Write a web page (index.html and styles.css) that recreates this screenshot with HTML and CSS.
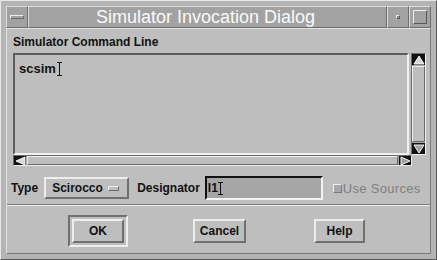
FILE: index.html
```html
<!DOCTYPE html>
<html lang="en">
<head>
    <meta charset="UTF-8">
    <title>Simulator Invocation Dialog</title>
    <link rel="stylesheet" href="styles.css">
</head>
<body>
    <div class="window">
        <!-- Рамка оконного менеджера -->
        <div class="titlebar">
            <div class="wm-btn"><span class="menu-bar"></span></div>
            <div class="title">Simulator Invocation Dialog</div>
            <div class="wm-btn"><span class="min-dot"></span></div>
            <div class="wm-btn"><span class="max-box"></span></div>
        </div>

        <div class="dialog">
            <div class="label">Simulator Command Line</div>

            <div class="scrolled">
                <div class="text-row">
                    <div class="text-area">
                        <span class="cmd">scsim</span><span class="ibeam"></span>
                    </div>
                    <div class="vscroll">
                        <div class="arrow">
                            <svg width="12" height="10" viewBox="0 0 12 10"><polygon points="6,1 11,9 1,9" fill="#d8d8d8" stroke="#f4f4f4"/></svg>
                        </div>
                        <div class="v-slider"></div>
                        <div class="arrow">
                            <svg width="12" height="10" viewBox="0 0 12 10"><polygon points="1,1 11,1 6,9" fill="#a0a0a0" stroke="#f4f4f4"/></svg>
                        </div>
                    </div>
                </div>
                <div class="hscroll">
                    <div class="arrow h">
                        <svg width="11" height="10" viewBox="0 0 11 10"><polygon points="1,5 10,1 10,9" fill="#d8d8d8" stroke="#f4f4f4"/></svg>
                    </div>
                    <div class="h-slider"></div>
                    <div class="arrow h">
                        <svg width="11" height="10" viewBox="0 0 11 10"><polygon points="1,1 10,5 1,9" fill="#a0a0a0" stroke="#f4f4f4"/></svg>
                    </div>
                </div>
            </div>

            <div class="options">
                <span class="opt-label">Type</span>
                <div class="option-menu">Scirocco <span class="opt-bar"></span></div>
                <span class="opt-label designator">Designator</span>
                <div class="field"><span class="field-text">I1</span><span class="ibeam small"></span></div>
                <div class="toggle"><span class="check"></span><span class="toggle-text">Use Sources</span></div>
            </div>

            <div class="separator"></div>

            <div class="actions">
                <div class="default-ring"><button class="push">OK</button></div>
                <button class="push">Cancel</button>
                <button class="push">Help</button>
            </div>
        </div>
    </div>
</body>
</html>
```

FILE: styles.css
```css
* {
    box-sizing: border-box;
    font-family: 'Liberation Sans', Arial, sans-serif;
}
body {
    margin: 0;
    background-color: #bebebe;
}

/* Рамка окна */
.window {
    width: 437px;
    height: 260px;
    padding: 5px;
    background-color: #b4b4b4;
    border: 1px solid;
    border-color: #e8e8e8 #5a5a5a #5a5a5a #e8e8e8;
    display: flex;
    flex-direction: column;
}
.titlebar {
    height: 22px;
    display: flex;
    background-color: #a2a2a2;
}
.wm-btn {
    width: 22px;
    height: 22px;
    border: 1px solid;
    border-color: #dcdcdc #6c6c6c #6c6c6c #dcdcdc;
    display: flex;
    align-items: center;
    justify-content: center;
}
.menu-bar {
    width: 14px;
    height: 4px;
    border: 1px solid;
    border-color: #eeeeee #6a6a6a #6a6a6a #eeeeee;
}
.min-dot {
    width: 4px;
    height: 4px;
    border: 1px solid;
    border-color: #eeeeee #5a5a5a #5a5a5a #eeeeee;
    background: #8a8a8a;
}
.max-box {
    width: 14px;
    height: 14px;
    border: 1px solid;
    border-color: #eeeeee #5a5a5a #5a5a5a #eeeeee;
}
.title {
    flex: 1;
    color: #fafafa;
    font-size: 18px;
    line-height: 20px;
    text-align: center;
    padding-right: 4px;
    border: 1px solid;
    border-color: #dcdcdc #6c6c6c #6c6c6c #dcdcdc;
}

/* Тело диалога */
.dialog {
    flex: 1;
    background-color: #bebebe;
    padding: 6px 4px 0 6px;
    border: 1px solid;
    border-color: #e4e4e4 #7a7a7a #7a7a7a #e4e4e4;
    display: flex;
    flex-direction: column;
}
.label {
    font-size: 12px;
    font-weight: bold;
    line-height: 14px;
    color: #111;
}
.scrolled {
    margin-top: 4px;
    display: flex;
    flex-direction: column;
}
.text-row {
    display: flex;
    gap: 2px;
    height: 102px;
}
.text-area {
    flex: 1;
    border: 2px solid;
    border-color: #5e5e5e #f0f0f0 #f0f0f0 #5e5e5e;
    padding: 7px 4px;
    display: flex;
    align-items: flex-start;
}
.cmd {
    font-size: 13px;
    font-weight: bold;
    line-height: 14px;
    color: #111;
}
.ibeam {
    width: 5px;
    height: 14px;
    margin-left: 1px;
    border-top: 1px solid #111;
    border-bottom: 1px solid #111;
    background: linear-gradient(#111, #111) center / 1px 100% no-repeat;
}
.vscroll {
    width: 15px;
    background-color: #a8a8a8;
    border: 1px solid;
    border-color: #6a6a6a #eeeeee #eeeeee #6a6a6a;
    display: flex;
    flex-direction: column;
}
.arrow {
    height: 11px;
    background: #111;
    display: flex;
    align-items: center;
    justify-content: center;
}
.arrow.h {
    width: 12px;
    height: auto;
}
.v-slider {
    flex: 1;
    margin: 1px 0;
    background: #bebebe;
    border: 1px solid;
    border-color: #eeeeee #6a6a6a #6a6a6a #eeeeee;
}
.hscroll {
    height: 11px;
    width: 399px;
    background-color: #a8a8a8;
    border: 1px solid;
    border-color: #6a6a6a #eeeeee #eeeeee #6a6a6a;
    display: flex;
}
.h-slider {
    flex: 1;
    margin: 0 1px;
    background: #bebebe;
    border: 1px solid;
    border-color: #eeeeee #6a6a6a #6a6a6a #eeeeee;
}

/* Строка параметров */
.options {
    margin: 10px 0 0 -2px;
    height: 24px;
    display: flex;
    align-items: center;
}
.opt-label {
    font-size: 12px;
    font-weight: bold;
    color: #111;
}
.option-menu {
    margin-left: 6px;
    width: 85px;
    height: 22px;
    padding-left: 6px;
    border: 2px solid;
    border-color: #eeeeee #707070 #707070 #eeeeee;
    font-size: 12px;
    font-weight: bold;
    color: #111;
    display: flex;
    align-items: center;
    gap: 5px;
}
.opt-bar {
    width: 11px;
    height: 5px;
    border: 1px solid;
    border-color: #eeeeee #6a6a6a #6a6a6a #eeeeee;
}
.designator {
    margin-left: 8px;
}
.field {
    margin-left: 5px;
    width: 118px;
    height: 24px;
    background: #a6a6a6;
    border: 2px solid;
    border-color: #111 #f4f4f4 #f4f4f4 #111;
    padding-left: 1px;
    display: flex;
    align-items: center;
}
.field-text {
    font-size: 12px;
    font-weight: bold;
    color: #111;
}
.ibeam.small {
    height: 13px;
    margin-left: 0;
}
.toggle {
    margin-left: 10px;
    display: flex;
    align-items: center;
    gap: 1px;
}
.check {
    width: 9px;
    height: 9px;
    background: #a8a8a8;
    border: 1px solid;
    border-color: #eeeeee #7a7a7a #7a7a7a #eeeeee;
}
.toggle-text {
    font-size: 13px;
    color: #808080;
    letter-spacing: 0.3px;
}
.separator {
    margin: 4px -4px 0 -6px;
    height: 2px;
    border-top: 1px solid #7a7a7a;
    border-bottom: 1px solid #eeeeee;
}

/* Кнопки */
.actions {
    margin-top: 9px;
    display: flex;
    align-items: center;
    padding-left: 55px;
}
.default-ring {
    width: 60px;
    height: 32px;
    padding: 2px;
    border: 2px solid;
    border-color: #707070 #eeeeee #eeeeee #707070;
}
.push {
    height: 24px;
    background: #bebebe;
    border: 2px solid;
    border-color: #eeeeee #707070 #707070 #eeeeee;
    font-size: 12px;
    font-weight: bold;
    color: #111;
    padding: 0;
}
.default-ring .push {
    width: 52px;
}
.push:nth-child(2) {
    width: 53px;
    margin-left: 65px;
}
.push:nth-child(3) {
    width: 51px;
    margin-left: 68px;
}
```
